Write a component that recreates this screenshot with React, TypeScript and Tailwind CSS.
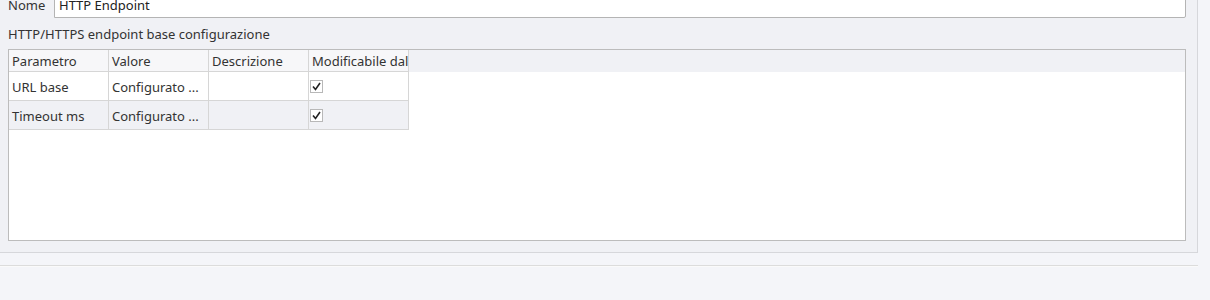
import React from "react";

const Check = () => (
  <div className="w-[13px] h-[13px] border border-[#b8b8b8] bg-white flex items-center justify-center">
    <svg width="9" height="9" viewBox="0 0 9 9">
      <path d="M1 4.5 L3.5 7.5 L8 1" fill="none" stroke="#222" strokeWidth="1.6" />
    </svg>
  </div>
);

const rows = [
  { p: "URL base", v: "Configurato ...", bg: "bg-white" },
  { p: "Timeout ms", v: "Configurato ...", bg: "bg-[#f0f1f5]" },
];

export default function App() {
  return (
    <div className="w-[1210px] h-[300px] bg-[#f4f5f9] overflow-hidden font-['Noto_Sans',sans-serif] text-[13px] text-[#333]">
      <div className="w-[1198px] h-[253px] bg-[#f0f1f5] border-r border-b border-[#d6d7db] flex flex-col">
        <div className="flex items-center h-[24px] mt-[-6px]">
          <span className="ml-[8px] w-[46px] text-[#333]">Nome</span>
          <div className="w-[1132px] h-[24px] bg-white border border-[#b4b4b4] rounded-br-[2px] flex items-center pl-[4px] text-[#222]">
            HTTP Endpoint
          </div>
        </div>
        <div className="ml-[8px] mt-[7px] h-[19px] leading-[19px]">HTTP/HTTPS endpoint base configurazione</div>
        <div className="ml-[8px] mt-[5px] w-[1178px] h-[192px] border border-[#bcbcbc] bg-white flex flex-col">
          <div className="flex h-[22px] bg-[#f0f1f5]">
            {["Parametro", "Valore", "Descrizione", "Modificabile dal"].map((h) => (
              <div
                key={h}
                className="w-[100px] h-[22px] bg-[#f7f7f9] border-r border-b border-[#d6d6d6] pl-[3px] leading-[23px] whitespace-nowrap overflow-hidden text-[#333]"
              >
                {h}
              </div>
            ))}
          </div>
          {rows.map((r) => (
            <div key={r.p} className={`flex h-[29px] w-[400px] ${r.bg}`}>
              <div className="w-[100px] border-r border-b border-[#d6d6d6] pl-[3px] leading-[30px]">{r.p}</div>
              <div className="w-[100px] border-r border-b border-[#d6d6d6] pl-[3px] leading-[30px] whitespace-nowrap overflow-hidden">{r.v}</div>
              <div className="w-[100px] border-r border-b border-[#d6d6d6]"></div>
              <div className="w-[100px] border-r border-b border-[#d6d6d6] flex items-center pl-[1px]">
                <Check />
              </div>
            </div>
          ))}
        </div>
      </div>
      <div className="mt-[12px] w-[1198px] h-[2px] border-t border-[#dcdcdc] bg-[#fafafa]"></div>
    </div>
  );
}
